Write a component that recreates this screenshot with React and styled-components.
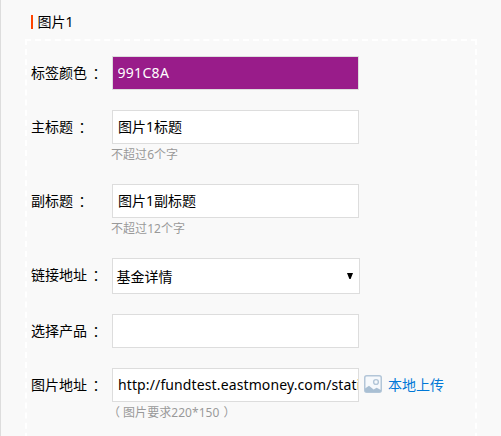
import React from 'react'
import styled, { createGlobalStyle } from 'styled-components'

const GlobalStyle = createGlobalStyle`
    * {
        box-sizing: border-box;
    }

    body {
        margin: 0;
        height: 436px;
        overflow: hidden;
        background: #f9f9f9;
        color: #000;
        font-family: "Noto Sans", "Noto Sans CJK SC", sans-serif;
        font-size: 14px;
    }
`

function FormRow({ label, hint, extra, children }) {
    return (
        <Row>
            <Label>
                {label}<Colon>：</Colon>
            </Label>
            <div>
                <FieldLine>
                    {children}
                    {extra}
                </FieldLine>
                {hint && <Hint>{hint}</Hint>}
            </div>
        </Row>
    )
}

function PictureIcon() {
    return (
        <svg width="18" height="18" viewBox="0 0 18 18">
            <rect x="0.75" y="0.75" width="16.5" height="16.5" rx="2" fill="#f6f9fc" stroke="#b3c6d8" strokeWidth="1.5" />
            <circle cx="12" cy="7" r="2.4" fill="none" stroke="#b3c6d8" strokeWidth="1.4" />
            <path d="M1 13.5 L5 10.8 L9.6 14.6 L12.6 12.8 L17 15 V16 Q17 17 16 17 H2 Q1 17 1 16 Z" fill="#a9bfd3" />
        </svg>
    )
}

function App() {
    return (
        <Page>
            <GlobalStyle />
            <Title>图片1</Title>
            <Panel>
                <FormRow label="标签颜色">
                    <Input $color="#991c8a" $spacing="0.3px" defaultValue="991C8A" />
                </FormRow>
                <FormRow label="主标题" hint="不超过6个字">
                    <Input defaultValue="图片1标题" />
                </FormRow>
                <FormRow label="副标题" hint="不超过12个字">
                    <Input defaultValue="图片1副标题" />
                </FormRow>
                <FormRow label="链接地址">
                    <Select>
                        基金详情
                        <svg width="6" height="6" viewBox="0 0 6 6">
                            <path d="M0 0 H6 L3.6 6 H2.4 Z" fill="#000" />
                        </svg>
                    </Select>
                </FormRow>
                <FormRow label="选择产品">
                    <Input />
                </FormRow>
                <FormRow
                    label="图片地址"
                    hint={<><OpenParen>（</OpenParen>图片要求220*150<CloseParen>）</CloseParen></>}
                    extra={<Upload><PictureIcon /><span>本地上传</span></Upload>}
                >
                    <Input $spacing="0.12px" defaultValue="http://fundtest.eastmoney.com/static/" />
                </FormRow>
            </Panel>
        </Page>
    )
}

export default App

const Page = styled.div`
    height: 436px;
    overflow: hidden;
    padding: 14px 24px 0;
    border-left: 1px solid #ddd;
`

const Title = styled.div`
    display: flex;
    align-items: center;
    height: 16px;
    margin: 0 0 9px 6px;
    line-height: 16px;

    &::before {
        content: '';
        width: 2px;
        height: 14px;
        margin-right: 4.5px;
        background: #ff4400;
    }
`

const Panel = styled.div`
    display: flex;
    flex-direction: column;
    gap: 20px;
    width: 452px;
    height: 420px;
    padding: 15px 5px 15px 4px;
    border: 2px dashed #fff;
`

const Row = styled.div`
    display: flex;
`

const Label = styled.label`
    display: flex;
    width: 81px;
    height: 34px;
    line-height: 34px;
    white-space: nowrap;
`

const Colon = styled.span`
    margin-left: 2px;
    font-family: "Noto Sans CJK TC", sans-serif;
`

const FieldLine = styled.div`
    display: flex;
`

const Input = styled.input`
    width: 247px;
    height: 34px;
    padding: 0 0 2px ${({ $color }) => ($color ? '4.5px' : '5px')};
    border: 1px solid #ddd;
    border-radius: 0;
    outline: none;
    background: ${({ $color }) => $color || '#fff'};
    color: ${({ $color }) => ($color ? '#fff' : '#000')};
    font: inherit;
    letter-spacing: ${({ $spacing }) => $spacing || 'normal'};
`

const Select = styled.div`
    display: flex;
    align-items: center;
    justify-content: space-between;
    width: 248px;
    height: 36px;
    padding: 0 6px 0 3.5px;
    border: 1px solid #ddd;
    background: #fff;
`

const Hint = styled.div`
    height: 20px;
    margin-left: -1px;
    padding-top: 1px;
    line-height: 20px;
    color: #999;
    font-size: 12px;
    letter-spacing: 0.05px;
    white-space: nowrap;
`

const OpenParen = styled.span`
    margin: 0 3px 0 -3px;
`

const CloseParen = styled.span`
    margin-left: 4px;
`

const Upload = styled.div`
    display: flex;
    align-items: center;
    gap: 6px;
    height: 34px;
    margin-left: 5px;
    padding-bottom: 2px;
    color: #0078d7;
    white-space: nowrap;
`
